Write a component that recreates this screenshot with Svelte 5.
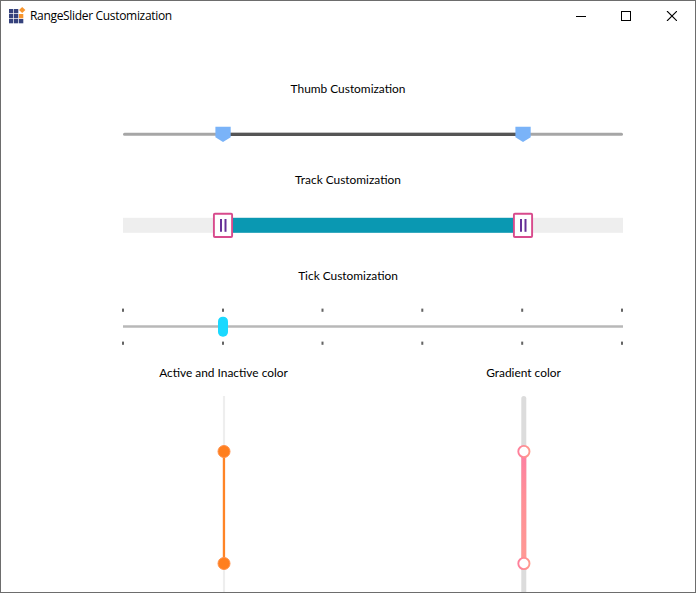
<script>
  const ticks = [0, 100, 199.5, 299.3, 399.2, 499];
  const thumbs = [100, 400];
</script>

<main class="window">
  <header>
    <svg class="logo" width="17" height="17" viewBox="0 0 17 17">
      {#each [0, 5, 10] as y}
        {#each [0, 5, 10] as x}
          {#if !(x === 10 && y === 0)}
            <rect x={x} y={y + 2} width="4.3" height="4.3" fill={x === 10 && y === 5 ? '#f6952e' : '#35427c'} />
          {/if}
        {/each}
      {/each}
      <path d="M13.2 0 16.4 3 13.2 6 10 3Z" fill="#f6952e" />
    </svg>
    <h1>RangeSlider Customization</h1>
    <div class="controls">
      <svg width="10" height="10"><path d="M0 5.5H10" stroke="#000" /></svg>
      <svg width="10" height="10"><rect x=".5" y=".5" width="9" height="9" fill="none" stroke="#000" /></svg>
      <svg width="11" height="10"><path d="M1 0 11 10M11 0 1 10" stroke="#000" stroke-width="1.1" /></svg>
    </div>
  </header>

  <section class="thumb">
    <h2>Thumb Customization</h2>
    <svg width="500" height="30">
      <path d="M1.5 14.3H498.5" stroke="#a6a6a6" stroke-width="3" stroke-linecap="round" />
      <path d="M100 14.3H400" stroke="#555" stroke-width="3.2" />
      {#each thumbs as x}
        <path transform="translate({x} 0)" d="M-7.6 6.8H7.7V17.2L0 22-7.6 17.2Z" fill="#7ab3f8" />
      {/each}
    </svg>
  </section>

  <section class="track">
    <h2>Track Customization</h2>
    <svg width="500" height="30">
      <rect y="7.8" width="500" height="15" fill="#eee" />
      <rect x="100" y="7.8" width="300" height="15" fill="#0a98b2" />
      {#each thumbs as x}
        <g transform="translate({x} 0)">
          <rect x="-9.1" y="3.8" width="18.2" height="23.2" rx="1" fill="#fff" stroke="#d84a8c" stroke-width="1.9" />
          <path d="M-2 9V21.8" stroke="#673198" stroke-width="2" />
          <path d="M2.5 9V21.8" stroke="#673198" stroke-width="2" />
        </g>
      {/each}
    </svg>
  </section>

  <section class="tick">
    <h2>Tick Customization</h2>
    <svg width="502" height="46">
      <path d="M1 22.5H501" stroke="#b8b8b8" stroke-width="2.5" />
      {#each ticks as x}
        <rect x={x} y="4.6" width="2" height="3.2" fill="#646464" />
        <rect x={x} y="37.6" width="2" height="3.2" fill="#646464" />
      {/each}
      <rect x="96" y="12.7" width="10" height="20" rx="4.8" fill="#1ad9ff" />
    </svg>
  </section>

  <section class="vertical">
    <article>
      <h2>Active and Inactive color</h2>
      <svg width="21" height="197">
        <rect x="9.9" y="1" width="2.2" height="200" fill="#eee" />
        <rect x="9.8" y="56" width="2.3" height="112" fill="#ff8426" />
        <circle cx="11" cy="56.5" r="6" fill="#ff7f1f" stroke="#ff914a" />
        <circle cx="11" cy="168.5" r="6" fill="#ff7f1f" stroke="#ff914a" />
      </svg>
    </article>
    <article>
      <h2>Gradient color</h2>
      <svg width="21" height="197">
        <defs>
          <linearGradient id="track" x1="0" y1="0" x2="0" y2="1">
            <stop offset="0" stop-color="#fd7fa3" />
            <stop offset=".4" stop-color="#ff8f97" />
            <stop offset="1" stop-color="#ff9a94" />
          </linearGradient>
          <linearGradient id="ring"><stop stop-color="#ff7f9b" /><stop offset="1" stop-color="#ff9a8d" /></linearGradient>
        </defs>
        <rect x="8.3" y="1" width="5" height="210" rx="2.5" fill="#dcdcdc" />
        <rect x="8.3" y="56" width="5" height="112" fill="url(#track)" />
        <circle cx="10.9" cy="56.5" r="5.6" fill="#fff" stroke="url(#ring)" stroke-width="1.9" />
        <circle cx="10.9" cy="168.5" r="5.6" fill="#fff" stroke="url(#ring)" stroke-width="1.9" />
      </svg>
    </article>
  </section>
</main>

<style>
  .window {
    box-sizing: border-box;
    width: 696px;
    height: 593px;
    overflow: hidden;
    border: 1px solid #6d6d6d;
    background: #fff;
    color: #000;
  }
  svg { display: block; flex: none; }
  header {
    display: flex;
    align-items: center;
    height: 29px;
    padding: 0 18px 0 8px;
  }
  .logo { margin: 0 4px 0 0; }
  h1 {
    margin: 0;
    font: 12px/18px "Open Sans", "Noto Sans", sans-serif;
    letter-spacing: -0.32px;
    white-space: nowrap;
  }
  .controls { display: flex; gap: 35px; margin-left: auto; }
  section {
    display: flex;
    flex-direction: column;
    align-items: center;
  }
  h2 {
    margin: 0;
    font: 11.9px/16px Lato, sans-serif;
    white-space: nowrap;
  }
  .thumb { padding-top: 51px; }
  .track { padding-top: 22px; }
  .tick { padding-top: 28px; }
  .thumb svg, .track svg { margin: 23px 0 0 50px; }
  .track svg { margin-top: 22px; }
  .tick svg { margin: 20px 0 0 50px; }
  .vertical {
    flex-direction: row;
    justify-content: center;
    padding-top: 15px;
    margin-left: 51px;
  }
  article {
    display: flex;
    flex-direction: column;
    align-items: center;
    width: 300px;
  }
  article svg { margin-top: 14px; }
</style>
